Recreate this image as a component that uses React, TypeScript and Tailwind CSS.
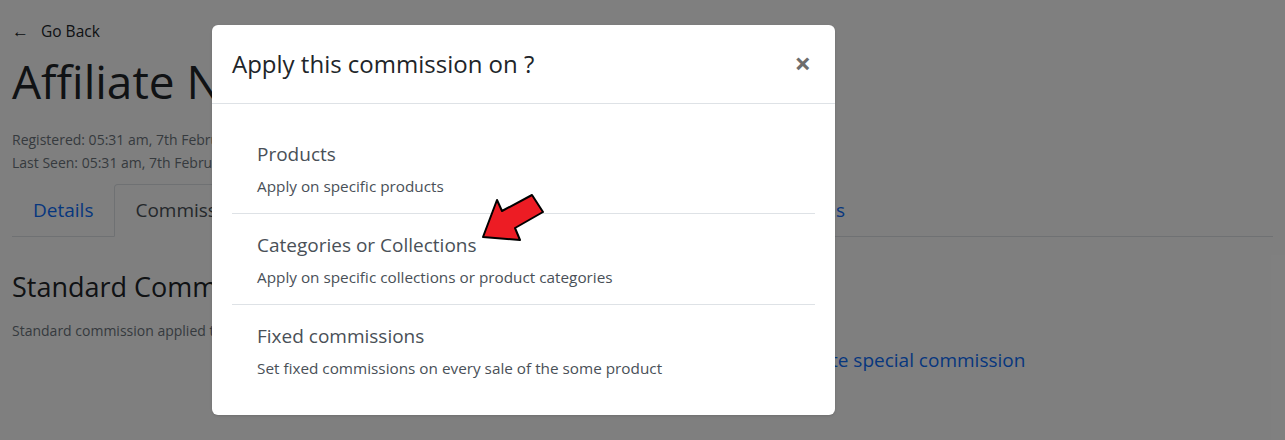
import React from 'react';

const tabs = ['Details', 'Commissions', 'Orders', 'Payouts', 'Customers', 'Referrals', 'Coupons'];

const options = [
  { title: 'Products', text: 'Apply on specific products' },
  { title: 'Categories or Collections', text: 'Apply on specific collections or product categories' },
  { title: 'Fixed commissions', text: 'Set fixed commissions on every sale of the some product' },
];

export default function App() {
  return (
    <div className="relative h-[440px] w-[1285px] overflow-hidden bg-white font-['Open_Sans',sans-serif] text-[#212529]">
      {/* page behind the modal */}
      <div className="px-3 pt-[19px]">
        <a className="flex items-center gap-3 text-[15.5px] leading-6">
          <span className="text-[17px]">←</span>
          <span>Go Back</span>
        </a>
        <h1 className="mt-[11px] text-[46px] leading-[1.2]">Affiliate Name</h1>
        <div className="mt-[19px] text-[14px] leading-[23px] text-[#6c757d]">
          <p>Registered: 05:31 am, 7th February 2022</p>
          <p>Last Seen: 05:31 am, 7th February 2022</p>
        </div>

        <ul className="mt-[10px] flex border-b border-[#dee2e6]">
          {tabs.map((t, i) => (
            <li
              key={t}
              className={
                i === 1
                  ? '-mb-px rounded-t border border-[#dee2e6] border-b-white bg-white px-[20px] py-[12px] text-[19px] leading-[27px] text-[#495057]'
                  : i === 2
                    ? '-mb-px border border-transparent px-[17.5px] py-[12px] text-[19px] leading-[27px] text-[#0d6efd]'
                    : '-mb-px border border-transparent px-[20px] py-[12px] text-[19px] leading-[27px] text-[#0d6efd]'
              }
            >
              {t}
            </li>
          ))}
        </ul>

        <div className="mt-[34px] grid grid-cols-[778px_1fr]">
          <div>
            <h3 className="text-[27px] leading-[1.2]">Standard Commission</h3>
            <p className="mt-[16px] text-[14px] text-[#6c757d]">Standard commission applied to all products</p>
          </div>
          <div className="pt-[75px]">
            <a className="text-[19px] text-[#0d6efd]">Create special commission</a>
          </div>
        </div>
      </div>

      {/* backdrop */}
      <div className="absolute inset-0 bg-black/50" />

      {/* modal */}
      <div className="absolute left-[212px] top-[25px] w-[623px] rounded-md bg-white shadow-sm">
        <div className="flex h-[79px] items-center justify-between border-b border-[#dee2e6] pl-5 pr-6">
          <h5 className="text-[24px] leading-9 text-[#212529]">Apply this commission on ?</h5>
          <span className="-mt-1 text-[29px] font-bold leading-none text-[#6d6d6d]">×</span>
        </div>
        <div className="px-5 pb-5 pt-[19px]">
          {options.map((o, i) => (
            <div
              key={o.title}
              className={
                'px-[25px] pb-[16px] pt-[19px] ' + (i < options.length - 1 ? 'border-b border-[#dee2e6]' : '')
              }
            >
              <div className="text-[19px] leading-6 text-[#495057]">{o.title}</div>
              <div className="mt-[9px] text-[15.3px] leading-[22px] text-[#495057]">{o.text}</div>
            </div>
          ))}
        </div>
      </div>

      {/* red arrow annotation */}
      <svg className="absolute left-0 top-0" width="1285" height="440" viewBox="0 0 1285 440">
        <polygon
          points="483,237 497,200 502,211 532,195 543,212 515,228 520,240"
          fill="#ed1c24"
          stroke="#000"
          strokeWidth="2"
          strokeLinejoin="round"
        />
      </svg>
    </div>
  );
}
